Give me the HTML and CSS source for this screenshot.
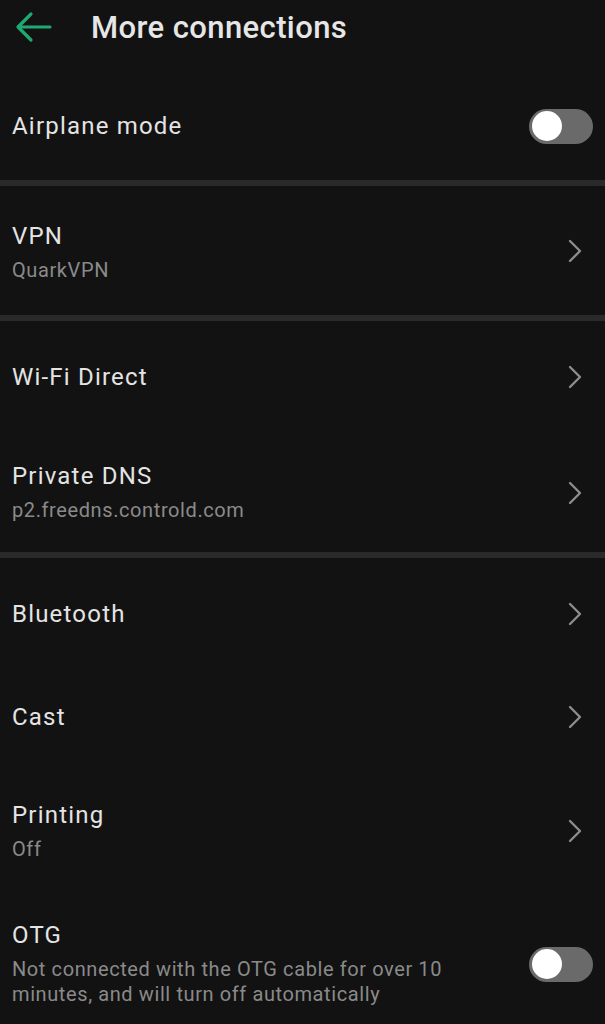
FILE: index.html
```html
<!DOCTYPE html>
<html>
<head>
<meta charset="utf-8">
<link rel="stylesheet" href="styles.css">
</head>
<body>
<div class="screen">
  <header class="topbar">
    <svg class="back" width="38" height="32" viewBox="0 0 38 32"><path d="M35 16H4M16 3L3 16L16 29" fill="none" stroke="#1fa872" stroke-width="3.2" stroke-linecap="round" stroke-linejoin="round"/></svg>
    <h1 class="title">More connections</h1>
  </header>

  <div class="row row-airplane">
    <div class="text"><div class="label">Airplane mode</div></div>
    <div class="toggle"><span class="knob"></span></div>
  </div>
  <div class="divider"></div>

  <div class="row row-vpn">
    <div class="text"><div class="label">VPN</div><div class="sub">QuarkVPN</div></div>
    <svg class="chev" width="14" height="24" viewBox="0 0 14 24"><path d="M2 2L12 12L2 22" fill="none" stroke="#8c8c8c" stroke-width="2.4" stroke-linecap="round" stroke-linejoin="round"/></svg>
  </div>
  <div class="divider"></div>

  <div class="row row-wifi">
    <div class="text"><div class="label">Wi-Fi Direct</div></div>
    <svg class="chev" width="14" height="24" viewBox="0 0 14 24"><path d="M2 2L12 12L2 22" fill="none" stroke="#8c8c8c" stroke-width="2.4" stroke-linecap="round" stroke-linejoin="round"/></svg>
  </div>
  <div class="row row-dns">
    <div class="text"><div class="label">Private DNS</div><div class="sub">p2.freedns.controld.com</div></div>
    <svg class="chev" width="14" height="24" viewBox="0 0 14 24"><path d="M2 2L12 12L2 22" fill="none" stroke="#8c8c8c" stroke-width="2.4" stroke-linecap="round" stroke-linejoin="round"/></svg>
  </div>
  <div class="divider"></div>

  <div class="row row-bt">
    <div class="text"><div class="label">Bluetooth</div></div>
    <svg class="chev" width="14" height="24" viewBox="0 0 14 24"><path d="M2 2L12 12L2 22" fill="none" stroke="#8c8c8c" stroke-width="2.4" stroke-linecap="round" stroke-linejoin="round"/></svg>
  </div>
  <div class="row row-cast">
    <div class="text"><div class="label">Cast</div></div>
    <svg class="chev" width="14" height="24" viewBox="0 0 14 24"><path d="M2 2L12 12L2 22" fill="none" stroke="#8c8c8c" stroke-width="2.4" stroke-linecap="round" stroke-linejoin="round"/></svg>
  </div>
  <div class="row row-print">
    <div class="text"><div class="label">Printing</div><div class="sub">Off</div></div>
    <svg class="chev" width="14" height="24" viewBox="0 0 14 24"><path d="M2 2L12 12L2 22" fill="none" stroke="#8c8c8c" stroke-width="2.4" stroke-linecap="round" stroke-linejoin="round"/></svg>
  </div>
  <div class="row row-otg">
    <div class="text"><div class="label">OTG</div><div class="sub sub-wrap">Not connected with the OTG cable for over 10 minutes, and will turn off automatically</div></div>
    <div class="toggle"><span class="knob"></span></div>
  </div>
</div>
</body>
</html>
```

FILE: styles.css
```css
* { box-sizing: border-box; }
html, body { margin: 0; padding: 0; background: #121212; }
body {
  font-family: Roboto, "Noto Sans", "Liberation Sans", sans-serif;
  color: #e4e4e4;
  width: 605px;
  height: 1024px;
  overflow: hidden;
}
.screen { display: flex; flex-direction: column; }

.topbar {
  height: 54px;
  display: flex;
  align-items: center;
  padding-left: 15px;
  gap: 38px;
}
.back { display: block; flex: none; }
.title {
  margin: 0;
  font-size: 31px;
  font-weight: 500;
  color: #e6e6e6;
  letter-spacing: 0.4px;
}

.row {
  display: flex;
  align-items: center;
  justify-content: space-between;
  padding: 0 12px 0 12px;
}
.row-airplane { height: 126px; padding-top: 18px; }
.row-vpn { height: 129px; padding-top: 4px; }
.row-wifi { height: 112px; }
.row-dns { height: 119px; }
.row-bt { height: 112px; }
.row-cast { height: 94px; }
.row-print { height: 134px; }
.row-otg { height: 132px; }

.text { display: flex; flex-direction: column; gap: 8px; }
.label { font-size: 24px; line-height: 28px; color: #e4e4e4; letter-spacing: 1.2px; }
.sub { font-size: 20px; line-height: 25px; color: #8a8a8a; letter-spacing: 0.6px; }
.sub-wrap { max-width: 450px; }

.chev { display: block; flex: none; margin-right: 11px; }
.row-vpn .chev { margin-top: -4px; }

.toggle {
  flex: none;
  width: 64px;
  height: 35px;
  border-radius: 18px;
  background: #6a6a6a;
  padding: 3px;
  display: flex;
  align-items: center;
}
.knob {
  width: 30px;
  height: 30px;
  border-radius: 50%;
  background: #ffffff;
}

.divider { height: 6px; background: #2a2a2a; }
```
